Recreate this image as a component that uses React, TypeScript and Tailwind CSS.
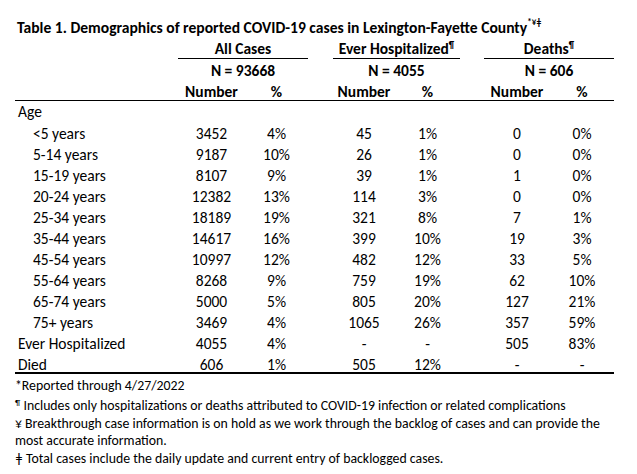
import React from "react"

type Row = {
  label: string
  indent?: boolean
  vals: string[]
}

const rows: Row[] = [
  { label: "<5 years", indent: true, vals: ["3452", "4%", "45", "1%", "0", "0%"] },
  { label: "5-14 years", indent: true, vals: ["9187", "10%", "26", "1%", "0", "0%"] },
  { label: "15-19 years", indent: true, vals: ["8107", "9%", "39", "1%", "1", "0%"] },
  { label: "20-24 years", indent: true, vals: ["12382", "13%", "114", "3%", "0", "0%"] },
  { label: "25-34 years", indent: true, vals: ["18189", "19%", "321", "8%", "7", "1%"] },
  { label: "35-44 years", indent: true, vals: ["14617", "16%", "399", "10%", "19", "3%"] },
  { label: "45-54 years", indent: true, vals: ["10997", "12%", "482", "12%", "33", "5%"] },
  { label: "55-64 years", indent: true, vals: ["8268", "9%", "759", "19%", "62", "10%"] },
  { label: "65-74 years", indent: true, vals: ["5000", "5%", "805", "20%", "127", "21%"] },
  { label: "75+ years", indent: true, vals: ["3469", "4%", "1065", "26%", "357", "59%"] },
  { label: "Ever Hospitalized", vals: ["4055", "4%", "-", "-", "505", "83%"] },
  { label: "Died", vals: ["606", "1%", "505", "12%", "-", "-"] },
]

// label | num % | gap | num % | gap | num %
const grid = "grid grid-cols-[163px_67px_63px_25px_62px_65px_24px_66px_64px]"

function Sup({ children, className = "" }: { children: React.ReactNode; className?: string }) {
  return <sup className={`text-[9px] ${className}`}>{children}</sup>
}

function DataRow({ row, last }: { row: Row; last?: boolean }) {
  const [a, b, c, d, e, f] = row.vals
  return (
    <div className={`${grid} h-[21px] items-center ${last ? "border-b-2 border-black" : ""}`}>
      <div className={row.indent ? "pl-[18px]" : "pl-[3px]"}>{row.label}</div>
      <div className="text-center">{a}</div>
      <div className="text-center">{b}</div>
      <div />
      <div className="text-center">{c}</div>
      <div className="text-center">{d}</div>
      <div />
      <div className="text-center">{e}</div>
      <div className="text-center">{f}</div>
    </div>
  )
}

export default function App() {
  return (
    <div
      className="min-h-screen bg-white pl-[15px] pt-[17px] text-[15.5px] text-black"
      style={{ fontFamily: 'Carlito, Lato, "Open Sans", sans-serif' }}
    >
      <div className="w-[599px]">
        <div className="flex h-[21px] items-center whitespace-nowrap pl-[2px] text-[15.6px] font-bold">
          Table 1. Demographics of reported COVID-19 cases in Lexington-Fayette County
          <Sup className="-top-[6px]">*¥ǂ</Sup>
        </div>

        {/* header groups */}
        <div className={`${grid} h-[21px] items-end font-bold`}>
          <div />
          <div className="col-span-2 border-b border-black text-center leading-[19px]">All Cases</div>
          <div />
          <div className="col-span-2 border-b border-black text-center leading-[19px]">
            Ever Hospitalized<Sup className="-top-[6px]">¶</Sup>
          </div>
          <div />
          <div className="col-span-2 border-b border-black text-center leading-[19px]">
            Deaths<Sup className="-top-[6px]">¶</Sup>
          </div>
        </div>

        <div className={`${grid} h-[21px] items-center font-bold`}>
          <div />
          <div className="col-span-2 text-center">N = 93668</div>
          <div />
          <div className="col-span-2 text-center">N = 4055</div>
          <div />
          <div className="col-span-2 text-center">N = 606</div>
        </div>

        <div className={`${grid} h-[21px] items-center border-b border-black font-bold`}>
          <div />
          <div className="text-center">Number</div>
          <div className="text-center">%</div>
          <div />
          <div className="text-center">Number</div>
          <div className="text-center">%</div>
          <div />
          <div className="text-center">Number</div>
          <div className="text-center">%</div>
        </div>

        <div className="flex h-[21px] items-center pl-[3px]">Age</div>
        {rows.map((row, i) => (
          <DataRow key={row.label} row={row} last={i === rows.length - 1} />
        ))}
      </div>

      <div className="w-[604px] pt-[3px] text-[13.8px] leading-[18px]">
        <div>*Reported through 4/27/2022</div>
        <div className="pt-[2px]">
          <Sup className="-top-[4px]">¶</Sup> Includes only hospitalizations or deaths attributed to COVID-19 infection or
          related complications
        </div>
        <div className="leading-[17px]">
          ¥ Breakthrough case information is on hold as we work through the backlog of cases and can provide the
          most accurate information.
        </div>
        <div className="pt-[1px]">ǂ Total cases include the daily update and current entry of backlogged cases.</div>
      </div>
    </div>
  )
}
